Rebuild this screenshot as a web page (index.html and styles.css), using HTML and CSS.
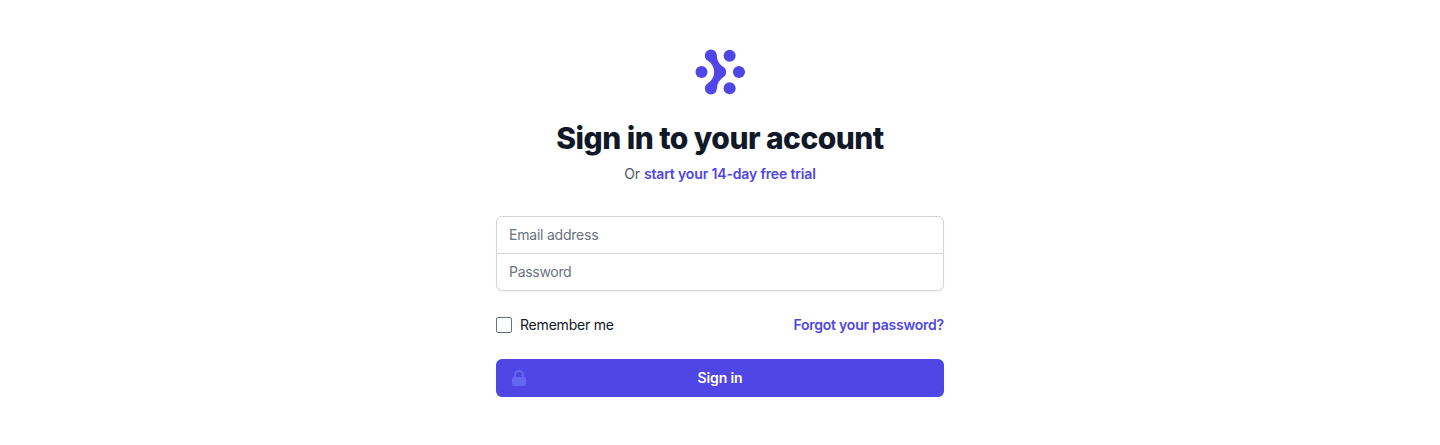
FILE: index.html
```html
<!DOCTYPE html>
<html lang="en">
<head>
<meta charset="utf-8">
<title>Sign in</title>
<link rel="stylesheet" href="styles.css">
</head>
<body>
<main class="page">
  <div class="panel">
    <svg class="logo" viewBox="0 0 35 32" fill="currentColor" aria-hidden="true">
      <path d="M15.258 26.865a4.043 4.043 0 01-1.133 2.917A4.006 4.006 0 0111.253 31a3.992 3.992 0 01-2.872-1.218 4.028 4.028 0 01-1.133-2.917c.009-.698.2-1.382.557-1.981.356-.6.863-1.094 1.47-1.433-.024.109.09-.055 0 0l1.86-1.652a8.495 8.495 0 002.304-5.793c0-2.926-1.711-5.901-4.17-7.457.094.055-.036-.094 0 0A3.952 3.952 0 017.8 7.116a3.975 3.975 0 01-.557-1.98 4.042 4.042 0 011.133-2.918A4.006 4.006 0 0111.247 1a3.99 3.99 0 012.872 1.218 4.025 4.025 0 011.133 2.917 8.521 8.521 0 002.347 5.832l.817.8c.326.285.668.551 1.024.798.621.33 1.142.826 1.504 1.431a3.902 3.902 0 01-1.504 5.442c.033-.067-.063.036 0 0a8.968 8.968 0 00-3.024 3.183 9.016 9.016 0 00-1.158 4.244z"/>
      <circle cx="23.74" cy="5.13" r="4.02"/>
      <circle cx="23.74" cy="26.86" r="4.02"/>
      <circle cx="29.99" cy="15.99" r="4.02"/>
      <circle cx="5" cy="15.99" r="4.02"/>
    </svg>
    <h1 class="title">Sign in to your account</h1>
    <p class="subtitle">Or <a class="link" href="#">start your 14-day free trial</a></p>
    <form class="form">
      <div class="fields">
        <input class="field" type="email" placeholder="Email address" aria-label="Email address">
        <input class="field" type="password" placeholder="Password" aria-label="Password">
      </div>
      <div class="options">
        <label class="remember"><input class="checkbox" type="checkbox">Remember me</label>
        <a class="link forgot" href="#">Forgot your password?</a>
      </div>
      <button class="submit" type="button">
        <svg class="lock" viewBox="0 0 20 20" fill="currentColor" aria-hidden="true">
          <path fill-rule="evenodd" clip-rule="evenodd" d="M5 9V7a5 5 0 0110 0v2a2 2 0 012 2v5a2 2 0 01-2 2H5a2 2 0 01-2-2v-5a2 2 0 012-2zm8-2v2H7V7a3 3 0 016 0z"/>
        </svg>
        Sign in
      </button>
    </form>
  </div>
</main>
</body>
</html>
```
FILE: styles.css
```css
*, *::before, *::after { box-sizing: border-box; }
body {
  margin: 0;
  background: #fff;
  color: #111827;
  font: 14px/20px Inter, "Liberation Sans", sans-serif;
}
.page {
  display: flex;
  justify-content: center;
  padding: 48px 32px;
}
.panel { width: 448px; }
.logo {
  display: block;
  height: 48px;
  margin: 0 auto;
  color: #4f46e5;
}
.title {
  margin: 24px 0 0;
  font-size: 30px;
  line-height: 36px;
  font-weight: 800;
  letter-spacing: -0.54px;
  text-align: center;
}
.subtitle {
  margin: 8px 0 0;
  text-align: center;
  color: #4b5563;
  letter-spacing: -0.09px;
}
.link {
  color: #4f46e5;
  font-weight: 600;
  letter-spacing: -0.15px;
  text-decoration: none;
}
.forgot { letter-spacing: -0.23px; }
.form {
  display: grid;
  gap: 24px;
  margin-top: 32px;
}
.fields {
  display: flex;
  flex-direction: column;
  border-radius: 6px;
  box-shadow: 0 1px 2px rgba(0, 0, 0, .05);
}
.field {
  width: 100%;
  height: 38px;
  margin: 0;
  padding: 7px 12px 9px;
  border: 1px solid #d1d5db;
  border-radius: 6px 6px 0 0;
  background: #fff;
  color: #111827;
  font: inherit;
  letter-spacing: -0.22px;
}
.field + .field {
  margin-top: -1px;
  border-radius: 0 0 6px 6px;
  letter-spacing: -0.3px;
}
.field::placeholder { color: #6b7280; opacity: 1; }
.options {
  display: flex;
  align-items: center;
  justify-content: space-between;
}
.remember {
  display: flex;
  align-items: center;
  gap: 8px;
  letter-spacing: -0.2px;
}
.checkbox {
  appearance: none;
  width: 16px;
  height: 16px;
  margin: 0;
  border: 1px solid #6b7280;
  border-radius: 2px;
  background: #fff;
}
.submit {
  position: relative;
  height: 38px;
  padding: 8px 16px;
  border: 1px solid transparent;
  border-radius: 6px;
  background: #4f46e5;
  color: #fff;
  font: inherit;
  font-weight: 600;
  letter-spacing: -0.1px;
}
.lock {
  position: absolute;
  left: 12px;
  top: 8px;
  width: 20px;
  height: 20px;
  color: #6366f1;
}
```
